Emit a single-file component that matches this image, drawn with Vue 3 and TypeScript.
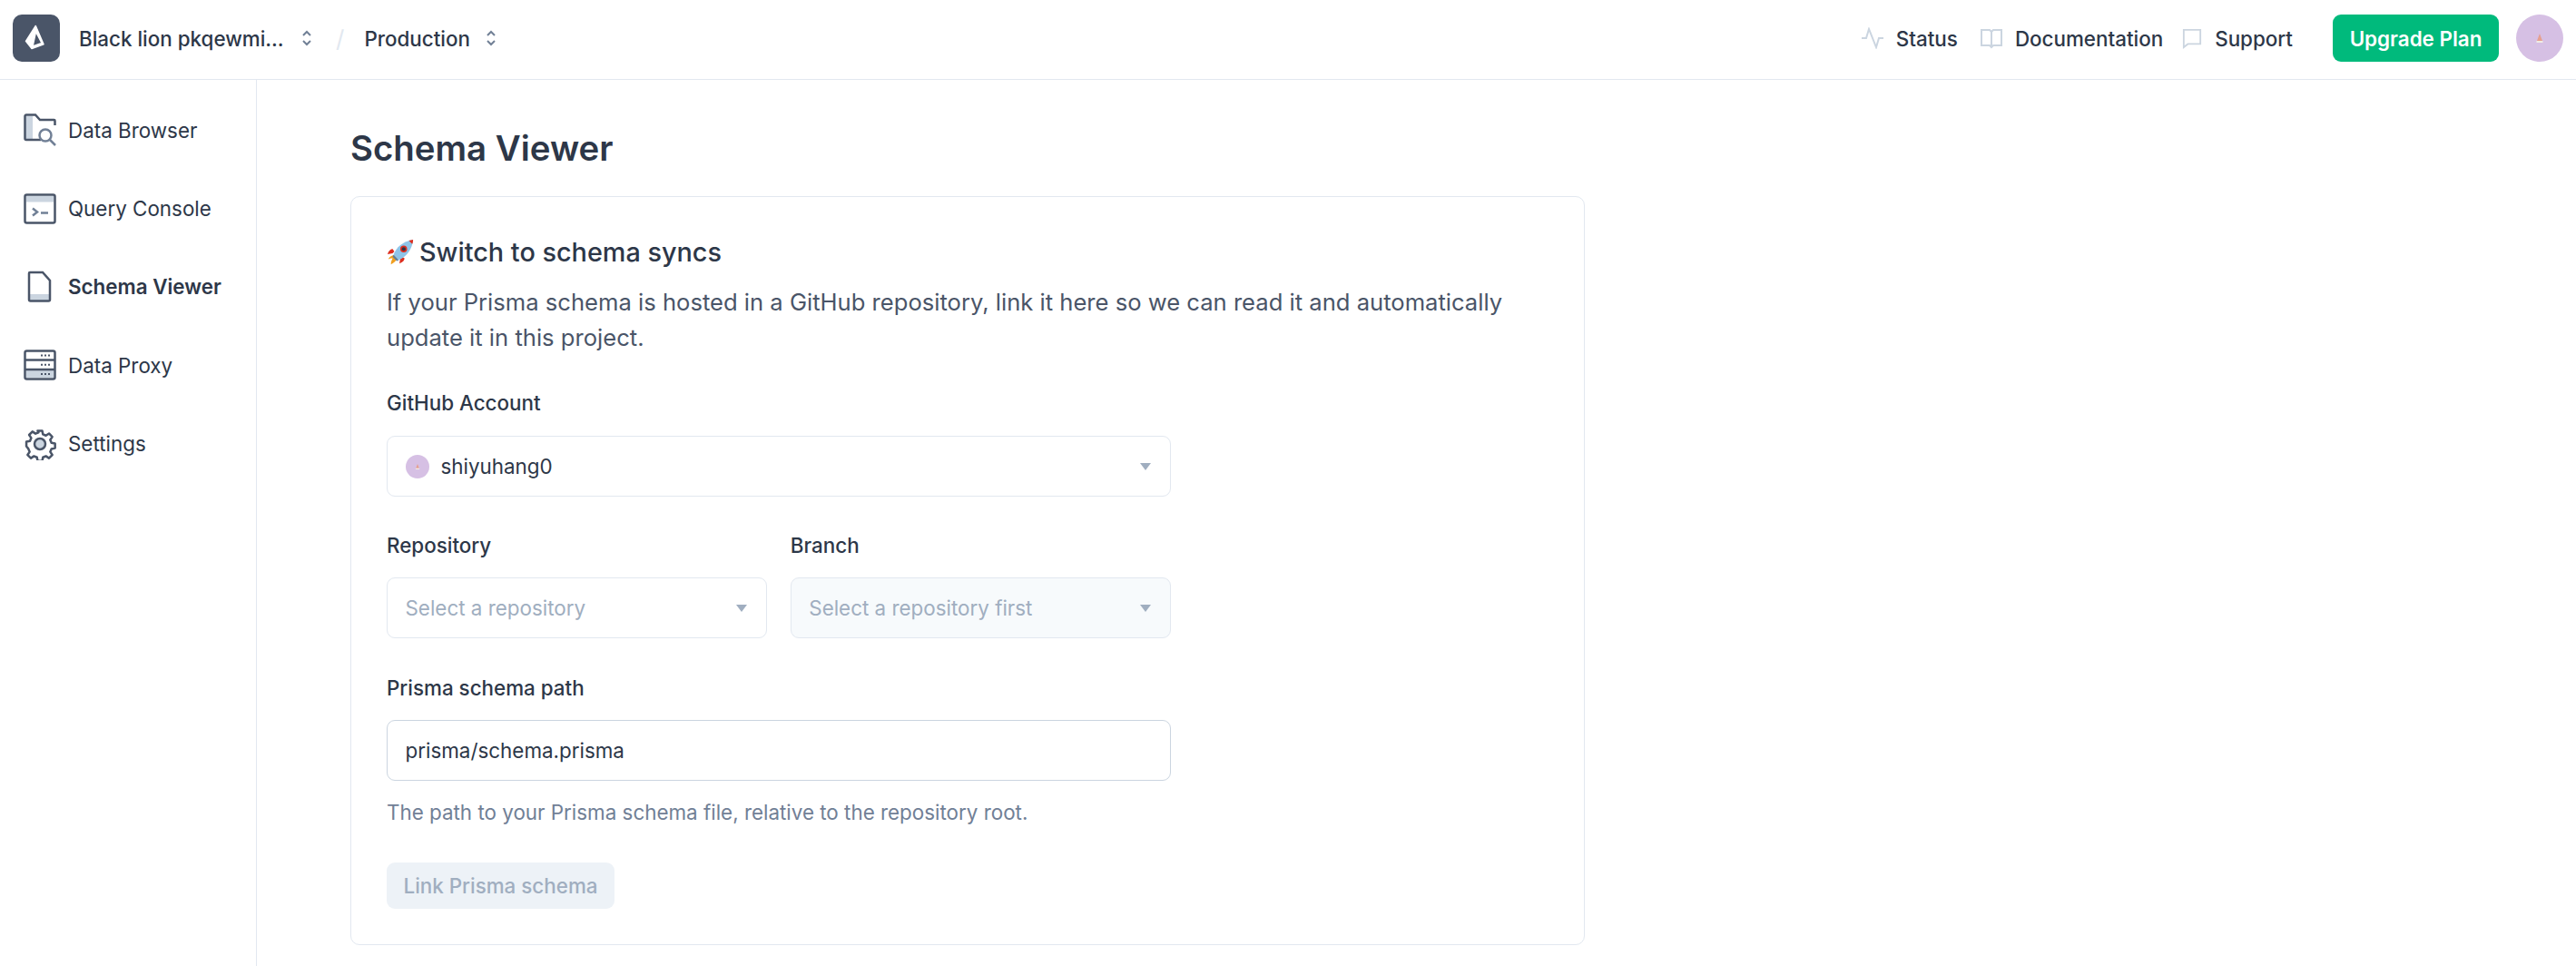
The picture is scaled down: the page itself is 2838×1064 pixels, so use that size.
<script setup lang="ts">
interface NavItem { label: string; icon: string; active?: boolean }
const nav: NavItem[] = [
  { label: 'Data Browser', icon: 'browser' },
  { label: 'Query Console', icon: 'console' },
  { label: 'Schema Viewer', icon: 'schema', active: true },
  { label: 'Data Proxy', icon: 'proxy' },
  { label: 'Settings', icon: 'settings' },
]
</script>

<template>
  <div class="page">
    <header class="topbar">
      <div class="brand">
        <div class="logo">
          <svg viewBox="0 0 52 52" width="52" height="52"><path fill="#fff" stroke="#fff" stroke-width="1.500" stroke-linejoin="round" fill-rule="evenodd" d="M25.300 12.500L14.500 29.300 21 37.500 34 32.700zM25.500 19L32 31.500 22 35z"/></svg>
        </div>
        <span class="crumb first">Black lion pkqewmi...</span>
        <svg class="updown" viewBox="0 0 12 20" width="12" height="20"><path d="M2 7l4-4 4 4M2 13l4 4 4-4" fill="none" stroke="#718096" stroke-width="2"/></svg>
        <span class="slash">/</span>
        <span class="crumb">Production</span>
        <svg class="updown second" viewBox="0 0 12 20" width="12" height="20"><path d="M2 7l4-4 4 4M2 13l4 4 4-4" fill="none" stroke="#718096" stroke-width="2"/></svg>
      </div>
      <div class="actions">
        <a class="link status">
          <svg viewBox="0 0 24 24" width="24" height="24"><path d="M0 12h5L8 2l8 20 3-10h5" fill="none" stroke="#cbd5e0" stroke-width="2"/></svg>
          <span>Status</span>
        </a>
        <a class="link doc">
          <svg viewBox="0 0 24 24" width="24" height="24"><path d="M1 3h9l2 2 2-2h9v17h-9l-2 2-2-2H1zM12 5v17" fill="none" stroke="#cbd5e0" stroke-width="2"/></svg>
          <span>Documentation</span>
        </a>
        <a class="link sup">
          <svg viewBox="0 0 24 24" width="22" height="24"><path d="M2 2h20v17H7l-5 4z" fill="none" stroke="#cbd5e0" stroke-width="2"/></svg>
          <span>Support</span>
        </a>
        <button class="upgrade">Upgrade Plan</button>
        <div class="avatar">
          <svg viewBox="0 0 20 24" width="10" height="14"><path d="M10 2L4 18h12z" fill="#e6a08f"/><rect x="3" y="18" width="14" height="4" fill="#f0ece4"/></svg>
        </div>
      </div>
    </header>

    <div class="body">
      <aside class="sidebar">
        <div v-for="item in nav" :key="item.label" class="nav-item" :class="{ active: item.active }">
          <span class="nav-icon">
            <svg v-if="item.icon === 'browser'" viewBox="0 0 36 36" width="36" height="36">
              <path d="M2 3h8v26H2z" fill="#cbd5e0"/>
              <path d="M19 29H3a1.500 1.500 0 0 1-1.500-1.500V3A1.500 1.500 0 0 1 3 1.500h10L18 7h15.500a1 1 0 0 1 1 1v5" fill="none" stroke="#4a5568" stroke-width="2.500"/>
              <circle cx="24" cy="24" r="6.500" fill="none" stroke="#718096" stroke-width="2.500"/>
              <path d="M29 29l6 6" stroke="#718096" stroke-width="2.500"/>
            </svg>
            <svg v-else-if="item.icon === 'console'" viewBox="0 0 36 34" width="36" height="34">
              <rect x="1.500" y="1.500" width="33" height="31" rx="2" fill="#fff" stroke="#4a5568" stroke-width="2.500"/>
              <rect x="3" y="3" width="30" height="6.500" fill="#cbd5e0"/>
              <path d="M10 16.500l5 4-5 4" fill="none" stroke="#718096" stroke-width="2.500"/>
              <path d="M19 21.500h8" stroke="#718096" stroke-width="2.500"/>
            </svg>
            <svg v-else-if="item.icon === 'schema'" viewBox="0 0 36 36" width="36" height="36">
              <path d="M7 26h22v7H7z" fill="#cbd5e0"/>
              <path d="M7 2h14l8 9v21a1.500 1.500 0 0 1-1.500 1.500h-20A1.500 1.500 0 0 1 6 32V3a1 1 0 0 1 1-1z" fill="none" stroke="#4a5568" stroke-width="2.500"/>
            </svg>
            <svg v-else-if="item.icon === 'proxy'" viewBox="0 0 36 34" width="36" height="34">
              <rect x="1.500" y="1.500" width="33" height="31" rx="2" fill="#fff" stroke="#4a5568" stroke-width="2.500"/>
              <rect x="3" y="23" width="30" height="8" fill="#cbd5e0"/>
              <path d="M2 11.500h32M2 22h32" stroke="#4a5568" stroke-width="2.500"/>
              <path d="M19 6.500h2m2 0h2m2 0h2M19 16.800h2m2 0h2m2 0h2M19 27h2m2 0h2m2 0h2" stroke="#4a5568" stroke-width="2"/>
            </svg>
            <svg v-else viewBox="0 0 36 36" width="36" height="36">
              <circle cx="18" cy="18" r="6" fill="#cbd5e0" stroke="#4a5568" stroke-width="2.500"/>
              <path d="M15.200 1.800h5.600l.9 4.400 3.600 1.500 3.800-2.500 4 4-2.500 3.800 1.500 3.600 4.400.9v5.600l-4.400.9-1.500 3.600 2.500 3.800-4 4-3.800-2.500-3.600 1.500-.9 4.400h-5.600l-.9-4.400-3.600-1.500-3.800 2.500-4-4 2.500-3.800-1.500-3.600L1.400 20.800v-5.600l4.400-.9 1.500-3.600-2.500-3.800 4-4 3.800 2.500 3.600-1.500z" transform="translate(1.800 1.800) scale(.9)" fill="none" stroke="#4a5568" stroke-width="2.800" stroke-linejoin="round"/>
            </svg>
          </span>
          <span class="nav-label">{{ item.label }}</span>
        </div>
      </aside>

      <main class="content">
        <h1 class="title">Schema Viewer</h1>
        <section class="card">
          <h2 class="card-title">
            <svg class="rocket" viewBox="0 0 32 32" width="30" height="30">
              <path d="M11 19c-4 0-8 2-9 5 2-1 4-1 5-1-1 2-2 4-2 7 3-1 6-4 8-7z" fill="#f0a020"/>
              <path d="M7 12c-2 0-5 2-6 6l6-1 2-2zM21 23c0 2-2 5-6 6l1-6 2-2z" fill="#dd2e1f"/>
              <path d="M8 19C11 10 19 3 31 1c-1 12-8 20-17 24z" fill="#8fc4e8"/>
              <path d="M26 2l5-1c0 2 0 3-1 5z" fill="#dd2e1f"/>
              <circle cx="20" cy="12" r="4" fill="#dd2e1f"/>
              <circle cx="20" cy="12" r="2.200" fill="#28374a"/>
              <path d="M8 19l6 6-2 1-5-5z" fill="#5a7ea0"/>
            </svg>
            <span>Switch to schema syncs</span>
          </h2>
          <p class="intro">If your Prisma schema is hosted in a GitHub repository, link it here so we can read it and automatically update it in this project.</p>

          <label class="label account-label">GitHub Account</label>
          <div class="select wide">
            <span class="mini-avatar"><svg viewBox="0 0 20 24" width="6" height="8"><path d="M10 2L4 18h12z" fill="#e6a08f"/><rect x="3" y="18" width="14" height="4" fill="#f0ece4"/></svg></span>
            <span class="value">shiyuhang0</span>
            <span class="caret"></span>
          </div>

          <div class="two">
            <div class="col">
              <label class="label">Repository</label>
              <div class="select"><span class="placeholder">Select a repository</span><span class="caret"></span></div>
            </div>
            <div class="col">
              <label class="label">Branch</label>
              <div class="select disabled"><span class="placeholder">Select a repository first</span><span class="caret"></span></div>
            </div>
          </div>

          <label class="label path-label">Prisma schema path</label>
          <div class="input">prisma/schema.prisma</div>
          <p class="help">The path to your Prisma schema file, relative to the repository root.</p>
          <button class="link-btn" disabled>Link Prisma schema</button>
        </section>
      </main>
    </div>
  </div>
</template>

<style>
html, body { margin: 0; background: #fff; overflow: hidden; }
</style>

<style scoped>
.page { width: 2838px; height: 1064px; display: flex; flex-direction: column; font-family: Inter, "Noto Sans", sans-serif; color: #2d3748; background: #fff; overflow: hidden; }
.topbar { height: 88px; box-sizing: border-box; flex: none; display: flex; align-items: center; justify-content: space-between; border-bottom: 1px solid #e2e8f0; padding: 0 14px 3px 14px; }
.brand, .actions { display: flex; align-items: center; }
.logo { width: 52px; height: 52px; background: #4a5568; border-radius: 10px; display: flex; align-items: center; justify-content: center; margin-right: 21px; }
.crumb { font-size: 22.4px; font-weight: 500; color: #2d3748; white-space: nowrap; }
.first { width: 245px; }
.updown.second { margin-left: 17px; }
.slash { font-size: 26px; color: #e2e8f0; margin: 0 22px 0 26px; }
.link { display: flex; align-items: center; gap: 14px; font-size: 22.4px; font-weight: 500; color: #2d3748; }
.status { margin-right: 25px; }
.doc { margin-right: 21px; }
.sup { margin-right: 44px; }
.upgrade { width: 183px; height: 52px; border: 0; border-radius: 9px; background: #00ba7c; color: #fff; font: 600 22.4px Inter, sans-serif; padding: 0; margin-right: 19px; }
.avatar { width: 52px; height: 52px; border-radius: 50%; background: #d6c0e4; display: flex; align-items: center; justify-content: center; }
.body { flex: 1; display: flex; min-height: 0; }
.sidebar { width: 282px; flex: none; border-right: 1px solid #e2e8f0; padding-top: 12px; }
.nav-item { height: 86.4px; display: flex; align-items: center; padding-left: 26px; }
.nav-icon { width: 36px; height: 36px; display: flex; align-items: center; justify-content: center; margin-right: 13px; flex: none; }
.nav-label { font-size: 22.4px; color: #2d3748; }
.nav-item.active .nav-label { font-weight: 600; }
.content { padding: 50px 0 0 103px; }
.title { margin: 0 0 28px; font-size: 38.4px; line-height: 50px; font-weight: 600; color: #2d3748; }
.card { width: 1360px; box-sizing: border-box; border: 1px solid #e2e8f0; border-radius: 10px; padding: 41px 39px 39px; }
.card-title { margin: 0; font-size: 28.8px; line-height: 40px; font-weight: 500; color: #2d3748; display: flex; align-items: center; gap: 6px; }
.intro { margin: 15px 0 0; font-size: 25.6px; line-height: 39px; color: #4a5568; width: 1282px; }
.label { display: block; font-size: 22.4px; font-weight: 500; line-height: 30px; color: #2d3748; }
.account-label { margin-top: 38px; margin-bottom: 21px; }
.select { position: relative; height: 67px; box-sizing: border-box; border: 1px solid #e2e8f0; border-radius: 9px; display: flex; align-items: center; padding: 0 19.500px; font-size: 22.4px; }
.wide { width: 864px; }
.mini-avatar { width: 26px; height: 26px; border-radius: 50%; background: #d6c0e4; margin-right: 13px; display: flex; align-items: center; justify-content: center; }
.value { color: #2d3748; }
.placeholder { color: #a0aec0; }
.caret { position: absolute; right: 21px; top: 29px; width: 0; height: 0; border-left: 6.400px solid transparent; border-right: 6.400px solid transparent; border-top: 8px solid #a0aec0; }
.two { display: grid; grid-template-columns: 419.200px 419.200px; column-gap: 25.600px; margin-top: 39px; }
.two .label { margin-bottom: 20px; }
.disabled { background: #f7fafc; }
.path-label { margin-top: 40px; margin-bottom: 20px; }
.input { width: 864px; height: 67px; box-sizing: border-box; border: 1px solid #cbd5e0; border-radius: 9px; display: flex; align-items: center; padding: 0 19.500px; font-size: 22.4px; color: #2d3748; }
.help { margin: 20px 0 0; font-size: 22.4px; line-height: 30px; color: #718096; }
.link-btn { display: block; margin-top: 40px; width: 251px; height: 51px; border: 0; border-radius: 9px; background: #edf2f7; color: #a0aec0; font: 500 22.4px Inter, sans-serif; padding: 0; }
</style>
